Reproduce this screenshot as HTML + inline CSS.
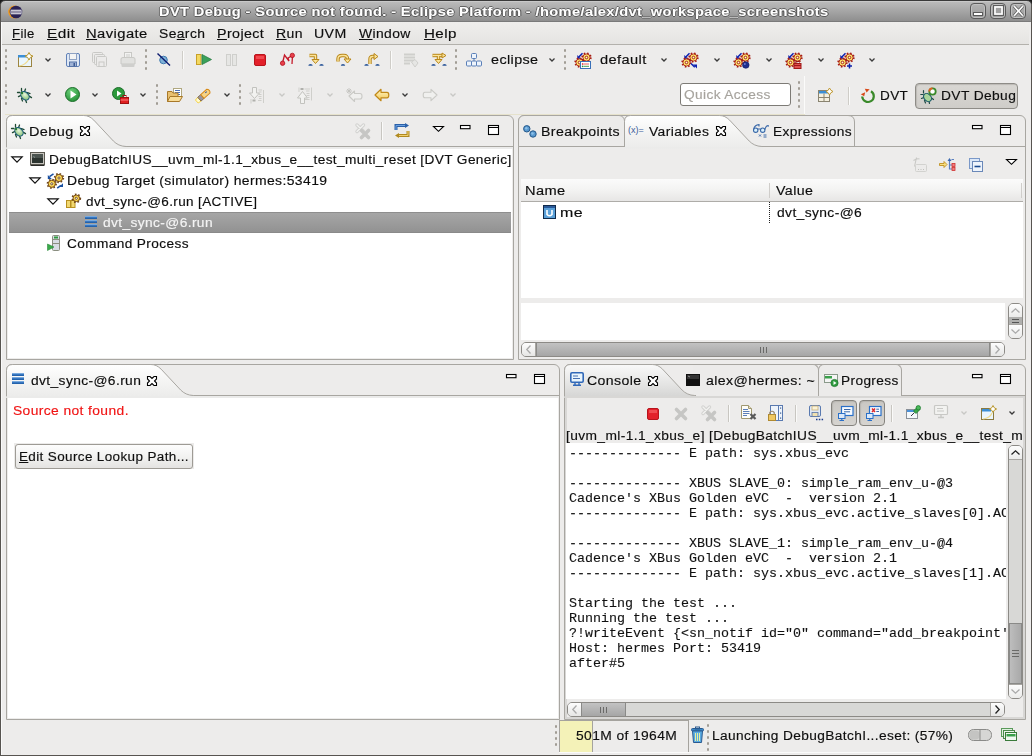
<!DOCTYPE html><html><head><meta charset="utf-8"><style>
*{box-sizing:border-box;margin:0;padding:0}
html,body{width:1032px;height:756px;overflow:hidden;background:#edeceb;font-family:"Liberation Sans",sans-serif;font-size:12.5px;color:#0e0e0e;letter-spacing:0.95px}
.a{position:absolute;white-space:nowrap}
svg.a{overflow:visible}
.t{line-height:15px;white-space:pre;will-change:transform;-webkit-text-stroke:0.15px currentColor}
.mono{font-family:"Liberation Mono",monospace;font-size:13.33px;letter-spacing:0;white-space:pre;line-height:15px;color:#111;will-change:transform;-webkit-text-stroke:0.12px #111}
u{text-decoration:underline;text-underline-offset:1px;text-decoration-thickness:1px}
</style></head><body>
<div class="a" style="left:0px;top:0px;width:8px;height:8px;background:#1a1a1a"></div>
<div class="a" style="left:1024px;top:0px;width:8px;height:8px;background:#1a1a1a"></div>
<div class="a" style="left:0px;top:0px;width:1032px;height:22px;background:linear-gradient(#bdbdbd,#8c8c8c);border-top:1px solid #3a3a3a;border-left:1px solid #4a4a4a;border-right:1px solid #4a4a4a;border-radius:5px 5px 0 0"></div>
<div class="a" style="left:0px;top:21px;width:1032px;height:1px;background:#7a7a7a"></div>
<div class="a" style="left:5px;top:1px;width:1022px;height:1px;background:#c9c9c9"></div>
<div class="a" style="left:0px;top:4px;width:1px;height:752px;background:#575450"></div>
<div class="a" style="left:1031px;top:4px;width:1px;height:752px;background:#575450"></div>
<div class="a" style="left:0px;top:755px;width:1032px;height:1px;background:#575450"></div>
<div class="a" style="left:1px;top:22px;width:1px;height:733px;background:#fafafa"></div>
<svg class="a" style="left:8px;top:5px;" width="15" height="14" viewBox="0 0 15 14"><circle cx="6.6" cy="7" r="6.4" fill="#f39a1a"/><circle cx="8" cy="7" r="6.3" fill="#2a2254"/><path d="M2.6 5.2H13.6M2.2 7H14.2M2.6 8.8H13.6" stroke="#fff" stroke-width="1.1"/></svg>
<div class="a t" style="left:158.88px;top:4.20px;color:#fff;text-shadow:1px 0 0 rgba(64,64,64,.7),-1px 0 0 rgba(64,64,64,.7),0 1px 0 rgba(64,64,64,.7),0 -1px 0 rgba(64,64,64,.7);font-size:13px;font-weight:bold;letter-spacing:0.35px;transform:scaleX(1.1219);transform-origin:0 0;">DVT Debug - Source not found. - Eclipse Platform - /home/alex/dvt_workspace_screenshots</div>
<div class="a" style="left:970px;top:3px;width:16px;height:16px;border:1px solid #5a5a5a;border-radius:4px;background:linear-gradient(#b2b2b2,#9c9c9c);box-shadow:inset 0 0 0 1px #c0c0c0"></div>
<svg class="a" style="left:973px;top:12px;" width="10" height="4" viewBox="0 0 10 4"><rect x="0.5" y="0.5" width="9" height="3" fill="#fff" stroke="#5a5a5a" stroke-width="1"/></svg>
<div class="a" style="left:990px;top:3px;width:16px;height:16px;border:1px solid #5a5a5a;border-radius:4px;background:linear-gradient(#b2b2b2,#9c9c9c);box-shadow:inset 0 0 0 1px #c0c0c0"></div>
<svg class="a" style="left:993px;top:5px;" width="11" height="11" viewBox="0 0 11 11"><rect x="0.5" y="0.5" width="10" height="10" fill="none" stroke="#5e5e5e" stroke-width="1"/><rect x="2" y="2" width="7" height="7" fill="#a0a0a0" stroke="#fff" stroke-width="1.6"/></svg>
<div class="a" style="left:1010px;top:3px;width:16px;height:16px;border:1px solid #5a5a5a;border-radius:4px;background:linear-gradient(#b2b2b2,#9c9c9c);box-shadow:inset 0 0 0 1px #c0c0c0"></div>
<svg class="a" style="left:1013px;top:5px;" width="11" height="12" viewBox="0 0 11 12"><path d="M1.2 1.2L9.8 10.8M9.8 1.2L1.2 10.8" stroke="#5a5a5a" stroke-width="3"/><path d="M1.2 1.2L9.8 10.8M9.8 1.2L1.2 10.8" stroke="#fff" stroke-width="1.6"/></svg>
<div class="a" style="left:2px;top:22px;width:1027px;height:22px;background:linear-gradient(#efeeec,#e5e4e2)"></div>
<div class="a" style="left:2px;top:44px;width:1027px;height:1px;background:#b3b1ac"></div>
<div class="a t" style="left:11.95px;top:26.97px;letter-spacing:0.35px;transform:scaleX(1.0499);transform-origin:0 0;"><u>F</u>ile</div>
<div class="a t" style="left:46.77px;top:26.97px;letter-spacing:0.35px;transform:scaleX(1.2319);transform-origin:0 0;"><u>E</u>dit</div>
<div class="a t" style="left:85.82px;top:26.97px;letter-spacing:0.35px;transform:scaleX(1.1830);transform-origin:0 0;"><u>N</u>avigate</div>
<div class="a t" style="left:159.29px;top:26.97px;letter-spacing:0.35px;transform:scaleX(1.1097);transform-origin:0 0;">Se<u>a</u>rch</div>
<div class="a t" style="left:216.86px;top:26.97px;letter-spacing:0.35px;transform:scaleX(1.1407);transform-origin:0 0;"><u>P</u>roject</div>
<div class="a t" style="left:276.28px;top:26.97px;letter-spacing:0.35px;transform:scaleX(1.1208);transform-origin:0 0;"><u>R</u>un</div>
<div class="a t" style="left:314.37px;top:26.97px;letter-spacing:0.35px;transform:scaleX(1.1323);transform-origin:0 0;">UVM</div>
<div class="a t" style="left:359.10px;top:26.97px;letter-spacing:0.35px;transform:scaleX(1.1104);transform-origin:0 0;"><u>W</u>indow</div>
<div class="a t" style="left:424.19px;top:26.97px;letter-spacing:0.35px;transform:scaleX(1.2100);transform-origin:0 0;"><u>H</u>elp</div>
<div class="a" style="left:5px;top:49px;width:2px;height:3px;background:#a09c94;border-radius:1px"></div>
<div class="a" style="left:5px;top:55px;width:2px;height:3px;background:#a09c94;border-radius:1px"></div>
<div class="a" style="left:5px;top:61px;width:2px;height:3px;background:#a09c94;border-radius:1px"></div>
<div class="a" style="left:5px;top:67px;width:2px;height:3px;background:#a09c94;border-radius:1px"></div>
<svg class="a" style="left:17px;top:52px;" width="16" height="16" viewBox="0 0 16 16"><rect x="1.5" y="3.5" width="13" height="11" fill="#eaf6fe" stroke="#9c8440"/><rect x="1" y="3" width="10" height="2.5" fill="#3c8fd6"/><path d="M2 14 Q9 13 12 7" stroke="#f0dc90" stroke-width="1.2" fill="none"/><path d="M12 0.5 L13.4 3 L16 4.2 L13.4 5.4 L12 8 L10.6 5.4 L8 4.2 L10.6 3 Z" fill="#fff" stroke="#b8962c" stroke-width="1"/></svg>
<svg class="a" style="left:45px;top:58px;" width="6" height="4" viewBox="0 0 6 4"><path d="M0.5 0.5 L3 3 L5.5 0.5" fill="none" stroke="#3a3a3a" stroke-width="1.3"/></svg>
<svg class="a" style="left:65px;top:52px;" width="16" height="16" viewBox="0 0 16 16"><rect x="1.5" y="1.5" width="13" height="13" rx="1.5" fill="#dfe8f5" stroke="#6282b8"/><rect x="4.5" y="1.5" width="7" height="6" fill="#f4f4f4" stroke="#8ea2c4"/><rect x="4.5" y="10" width="7" height="4.5" fill="#9fb3d6" stroke="#5674a8"/><rect x="8.5" y="11" width="1.5" height="3" fill="#3d5a92"/></svg>
<svg class="a" style="left:92px;top:52px;" width="16" height="16" viewBox="0 0 16 16"><g fill="none" stroke="#c9c9c6"><rect x="0.5" y="0.5" width="10" height="10" rx="1"/><rect x="2.5" y="2.5" width="10" height="10" rx="1" fill="#ecebea"/><rect x="4.5" y="4.5" width="10" height="10" rx="1" fill="#ecebea"/><rect x="7" y="10" width="5" height="4.5"/></g></svg>
<svg class="a" style="left:120px;top:52px;" width="16" height="16" viewBox="0 0 16 16"><rect x="4.5" y="0.5" width="7" height="8" fill="#f2f2f1" stroke="#c8c8c5"/><path d="M1 7 Q1 5.5 3 5.5 H13 Q15 5.5 15 7 V12 H1Z" fill="#e1e1df" stroke="#c8c8c5"/><rect x="1.5" y="12" width="13" height="3" rx="1" fill="#cfcfcd"/><path d="M6 3H10M6 5H10" stroke="#cdcdca"/></svg>
<div class="a" style="left:145px;top:49px;width:2px;height:3px;background:#a09c94;border-radius:1px"></div>
<div class="a" style="left:145px;top:55px;width:2px;height:3px;background:#a09c94;border-radius:1px"></div>
<div class="a" style="left:145px;top:61px;width:2px;height:3px;background:#a09c94;border-radius:1px"></div>
<div class="a" style="left:145px;top:67px;width:2px;height:3px;background:#a09c94;border-radius:1px"></div>
<svg class="a" style="left:157px;top:53px;" width="14" height="14" viewBox="0 0 14 14"><circle cx="6.5" cy="7" r="3.8" fill="#7fb2d8" stroke="#3f7ab0"/><path d="M0.5 0.5 L13 12.5" stroke="#0d1a6e" stroke-width="1.4"/></svg>
<div class="a" style="left:182px;top:51px;width:1px;height:18px;background:#cfcdc8"></div>
<div class="a" style="left:183px;top:51px;width:1px;height:18px;background:#fbfbfa"></div>
<svg class="a" style="left:196px;top:54px;" width="16" height="12" viewBox="0 0 16 12"><rect x="0.5" y="0.5" width="4.5" height="10" fill="#f3d860" stroke="#c8a028"/><path d="M6 0.5 L15.5 5.5 L6 10.5Z" fill="#3aa15a" stroke="#2c7e46" stroke-width="0.8"/></svg>
<svg class="a" style="left:226px;top:54px;" width="12" height="12" viewBox="0 0 12 12"><rect x="0.5" y="0.5" width="4" height="11" fill="#e6e6e4" stroke="#cfcfcc"/><rect x="6.5" y="0.5" width="4" height="11" fill="#e6e6e4" stroke="#cfcfcc"/></svg>
<svg class="a" style="left:254px;top:54px;" width="12" height="12" viewBox="0 0 12 12"><rect x="0.5" y="0.5" width="11" height="11" rx="1.5" fill="#e3202a" stroke="#b8141c"/><rect x="2" y="2" width="8" height="3" fill="#f04a50"/></svg>
<svg class="a" style="left:280px;top:53px;" width="15" height="13" viewBox="0 0 15 13"><path d="M2.5 10 L4.5 2 L9 8 L8 5 L12.5 2.5 L12 11" fill="none" stroke="#c51a2a" stroke-width="1.3"/><circle cx="2.6" cy="10.2" r="2.2" fill="#e8404a" stroke="#b01020" stroke-width="0.8"/><circle cx="12.3" cy="2.4" r="2.2" fill="#e8404a" stroke="#b01020" stroke-width="0.8"/></svg>
<svg class="a" style="left:308px;top:54px;" width="16" height="12" viewBox="0 0 16 12"><path d="M1.5 1.5 H7.5 V6" fill="none" stroke="#b8861a" stroke-width="3.4" stroke-linejoin="round"/><path d="M1.5 1.5 H7.5 V6" fill="none" stroke="#fbe49a" stroke-width="1.4" stroke-linejoin="round"/><path d="M4 5.5 H11 L7.5 9.5Z" fill="#fbe49a" stroke="#b8861a" stroke-width="1" stroke-linejoin="round"/><path d="M0.3 11.8 A2.2 1.8 0 0 1 4.7 11.8 Z" fill="#2a5698"/><path d="M11.3 11.8 A2.2 1.8 0 0 1 15.700000000000001 11.8 Z" fill="#2a5698"/></svg>
<svg class="a" style="left:336px;top:54px;" width="16" height="12" viewBox="0 0 16 12"><path d="M2 7.5 V5 Q2 1.5 6 1.5 H8 Q11.5 1.5 11.5 5" fill="none" stroke="#b8861a" stroke-width="3.4" stroke-linejoin="round"/><path d="M2 7.5 V5 Q2 1.5 6 1.5 H8 Q11.5 1.5 11.5 5" fill="none" stroke="#fbe49a" stroke-width="1.4" stroke-linejoin="round"/><path d="M8 5 H15 L11.5 9Z" fill="#fbe49a" stroke="#b8861a" stroke-width="1" stroke-linejoin="round"/><path d="M4.8 11.8 A2.2 1.8 0 0 1 9.2 11.8 Z" fill="#2a5698"/></svg>
<svg class="a" style="left:364px;top:53px;" width="16" height="13" viewBox="0 0 16 13"><path d="M6 11 V6 Q6 3.5 8.5 3.5 H10.5" fill="none" stroke="#b8861a" stroke-width="3.4" stroke-linejoin="round"/><path d="M6 11 V6 Q6 3.5 8.5 3.5 H10.5" fill="none" stroke="#fbe49a" stroke-width="1.4" stroke-linejoin="round"/><path d="M10 0.5 L14 3.5 L10 6.5Z" fill="#fbe49a" stroke="#b8861a" stroke-width="1" stroke-linejoin="round"/><path d="M0.3 12.8 A2.2 1.8 0 0 1 4.7 12.8 Z" fill="#2a5698"/><path d="M11.3 12.8 A2.2 1.8 0 0 1 15.700000000000001 12.8 Z" fill="#2a5698"/></svg>
<div class="a" style="left:390px;top:51px;width:1px;height:18px;background:#cfcdc8"></div>
<div class="a" style="left:391px;top:51px;width:1px;height:18px;background:#fbfbfa"></div>
<svg class="a" style="left:403px;top:53px;" width="16" height="15" viewBox="0 0 16 15"><path d="M1 1.5H12M1 4.5H12M1 7.5H12M1 10.5H7" stroke="#cfcfcc" stroke-width="2"/><path d="M8.5 9 L12 6.5 L15 10 L12 14 Z" fill="#e6e6e4" stroke="#cfcfcc"/></svg>
<svg class="a" style="left:431px;top:53px;" width="16" height="13" viewBox="0 0 16 13"><path d="M1.5 2.5 H11" fill="none" stroke="#b8861a" stroke-width="3.4" stroke-linejoin="round"/><path d="M1.5 2.5 H11" fill="none" stroke="#fbe49a" stroke-width="1.4" stroke-linejoin="round"/><path d="M11 0 L15 2.5 L11 5Z" fill="#fbe49a" stroke="#b8861a" stroke-width="1" stroke-linejoin="round"/><path d="M7.5 3 V7" fill="none" stroke="#b8861a" stroke-width="3.4" stroke-linejoin="round"/><path d="M7.5 3 V7" fill="none" stroke="#fbe49a" stroke-width="1.4" stroke-linejoin="round"/><path d="M4 6.5 H11 L7.5 10.5Z" fill="#fbe49a" stroke="#b8861a" stroke-width="1" stroke-linejoin="round"/><path d="M0.3 12.8 A2.2 1.8 0 0 1 4.7 12.8 Z" fill="#2a5698"/><path d="M11.3 12.8 A2.2 1.8 0 0 1 15.700000000000001 12.8 Z" fill="#2a5698"/></svg>
<div class="a" style="left:455px;top:49px;width:2px;height:3px;background:#a09c94;border-radius:1px"></div>
<div class="a" style="left:455px;top:55px;width:2px;height:3px;background:#a09c94;border-radius:1px"></div>
<div class="a" style="left:455px;top:61px;width:2px;height:3px;background:#a09c94;border-radius:1px"></div>
<div class="a" style="left:455px;top:67px;width:2px;height:3px;background:#a09c94;border-radius:1px"></div>
<svg class="a" style="left:466px;top:53px;" width="17" height="14" viewBox="0 0 17 14"><g fill="#eef4fb" stroke="#5a7fb8"><rect x="5.5" y="0.5" width="5" height="5" rx="1"/><rect x="0.5" y="8" width="5" height="5" rx="1"/><rect x="5.5" y="8" width="5" height="5" rx="1"/><rect x="10.5" y="8" width="5" height="5" rx="1"/></g><path d="M8 5.5V8" stroke="#5a7fb8"/></svg>
<div class="a t" style="left:490.70px;top:53.27px;letter-spacing:0.35px;transform:scaleX(1.1483);transform-origin:0 0;">eclipse</div>
<svg class="a" style="left:549px;top:58px;" width="6" height="4" viewBox="0 0 6 4"><path d="M0.5 0.5 L3 3 L5.5 0.5" fill="none" stroke="#3a3a3a" stroke-width="1.3"/></svg>
<div class="a" style="left:564px;top:49px;width:2px;height:3px;background:#a09c94;border-radius:1px"></div>
<div class="a" style="left:564px;top:55px;width:2px;height:3px;background:#a09c94;border-radius:1px"></div>
<div class="a" style="left:564px;top:61px;width:2px;height:3px;background:#a09c94;border-radius:1px"></div>
<div class="a" style="left:564px;top:67px;width:2px;height:3px;background:#a09c94;border-radius:1px"></div>
<svg class="a" style="left:574px;top:52px;" width="17" height="17" viewBox="0 0 17 17"><path d="M8.5 1.3 L4.8 5" stroke="#0c20b0" stroke-width="1.5"/><path d="M3.3 3 L3.3 6.7 L7 6.7 Z" fill="#0c20b0"/><circle cx="12.5" cy="5.5" r="4.3" fill="none" stroke="#a81c12" stroke-width="1.7" stroke-dasharray="1.5 1.9"/><circle cx="12.5" cy="5.5" r="3.5999999999999996" fill="#fbe46a" stroke="#a81c12" stroke-width="0.9"/><circle cx="12.5" cy="5.5" r="1.3" fill="#fff8d8" stroke="#a81c12" stroke-width="1"/><circle cx="5.5" cy="10.5" r="4.3" fill="none" stroke="#a81c12" stroke-width="1.7" stroke-dasharray="1.5 1.9"/><circle cx="5.5" cy="10.5" r="3.5999999999999996" fill="#fbe46a" stroke="#a81c12" stroke-width="0.9"/><circle cx="5.5" cy="10.5" r="1.3" fill="#fff8d8" stroke="#a81c12" stroke-width="1"/><rect x="6.5" y="9.5" width="10" height="7" fill="#fff" stroke="#3a70b8"/><circle cx="8.7" cy="12" r="0.9" fill="#e04848"/><path d="M10 12H15" stroke="#e86060"/><circle cx="8.7" cy="14.3" r="0.9" fill="#2a8a40"/><path d="M10 14.3H15" stroke="#4aa050"/></svg>
<div class="a t" style="left:599.50px;top:53.27px;letter-spacing:0.35px;transform:scaleX(1.1680);transform-origin:0 0;">default</div>
<svg class="a" style="left:661px;top:58px;" width="6" height="4" viewBox="0 0 6 4"><path d="M0.5 0.5 L3 3 L5.5 0.5" fill="none" stroke="#3a3a3a" stroke-width="1.3"/></svg>
<svg class="a" style="left:681px;top:52px;" width="17" height="17" viewBox="0 0 17 17"><path d="M8.5 1.3 L4.8 5" stroke="#0c20b0" stroke-width="1.5"/><path d="M3.3 3 L3.3 6.7 L7 6.7 Z" fill="#0c20b0"/><circle cx="12.5" cy="5.5" r="4.3" fill="none" stroke="#a81c12" stroke-width="1.7" stroke-dasharray="1.5 1.9"/><circle cx="12.5" cy="5.5" r="3.5999999999999996" fill="#fbe46a" stroke="#a81c12" stroke-width="0.9"/><circle cx="12.5" cy="5.5" r="1.3" fill="#fff8d8" stroke="#a81c12" stroke-width="1"/><circle cx="5.5" cy="10.5" r="4.3" fill="none" stroke="#a81c12" stroke-width="1.7" stroke-dasharray="1.5 1.9"/><circle cx="5.5" cy="10.5" r="3.5999999999999996" fill="#fbe46a" stroke="#a81c12" stroke-width="0.9"/><circle cx="5.5" cy="10.5" r="1.3" fill="#fff8d8" stroke="#a81c12" stroke-width="1"/><path d="M10 11.5 L13.8 15.3" stroke="#0c20b0" stroke-width="1.5"/><path d="M16 16.5 V12.5 H12Z" fill="#0c20b0"/></svg>
<svg class="a" style="left:714px;top:58px;" width="6" height="4" viewBox="0 0 6 4"><path d="M0.5 0.5 L3 3 L5.5 0.5" fill="none" stroke="#3a3a3a" stroke-width="1.3"/></svg>
<svg class="a" style="left:733px;top:52px;" width="17" height="17" viewBox="0 0 17 17"><path d="M8.5 1.3 L4.8 5" stroke="#0c20b0" stroke-width="1.5"/><path d="M3.3 3 L3.3 6.7 L7 6.7 Z" fill="#0c20b0"/><circle cx="12.5" cy="5.5" r="4.3" fill="none" stroke="#a81c12" stroke-width="1.7" stroke-dasharray="1.5 1.9"/><circle cx="12.5" cy="5.5" r="3.5999999999999996" fill="#fbe46a" stroke="#a81c12" stroke-width="0.9"/><circle cx="12.5" cy="5.5" r="1.3" fill="#fff8d8" stroke="#a81c12" stroke-width="1"/><circle cx="5.5" cy="10.5" r="4.3" fill="none" stroke="#a81c12" stroke-width="1.7" stroke-dasharray="1.5 1.9"/><circle cx="5.5" cy="10.5" r="3.5999999999999996" fill="#fbe46a" stroke="#a81c12" stroke-width="0.9"/><circle cx="5.5" cy="10.5" r="1.3" fill="#fff8d8" stroke="#a81c12" stroke-width="1"/><circle cx="12.8" cy="13" r="3.3" fill="#1e2e8e" stroke="#101a60" stroke-width="0.6"/><circle cx="11.8" cy="12" r="1" fill="#6a7ad0"/></svg>
<svg class="a" style="left:766px;top:58px;" width="6" height="4" viewBox="0 0 6 4"><path d="M0.5 0.5 L3 3 L5.5 0.5" fill="none" stroke="#3a3a3a" stroke-width="1.3"/></svg>
<svg class="a" style="left:785px;top:52px;" width="17" height="17" viewBox="0 0 17 17"><path d="M8.5 1.3 L4.8 5" stroke="#0c20b0" stroke-width="1.5"/><path d="M3.3 3 L3.3 6.7 L7 6.7 Z" fill="#0c20b0"/><circle cx="12.5" cy="5.5" r="4.3" fill="none" stroke="#a81c12" stroke-width="1.7" stroke-dasharray="1.5 1.9"/><circle cx="12.5" cy="5.5" r="3.5999999999999996" fill="#fbe46a" stroke="#a81c12" stroke-width="0.9"/><circle cx="12.5" cy="5.5" r="1.3" fill="#fff8d8" stroke="#a81c12" stroke-width="1"/><circle cx="5.5" cy="10.5" r="4.3" fill="none" stroke="#a81c12" stroke-width="1.7" stroke-dasharray="1.5 1.9"/><circle cx="5.5" cy="10.5" r="3.5999999999999996" fill="#fbe46a" stroke="#a81c12" stroke-width="0.9"/><circle cx="5.5" cy="10.5" r="1.3" fill="#fff8d8" stroke="#a81c12" stroke-width="1"/><rect x="9" y="11.5" width="7" height="5" fill="#e05050" stroke="#a01818"/><path d="M9 13.5H16" stroke="#a01818"/><rect x="11" y="9.5" width="3" height="2" fill="none" stroke="#a01818"/></svg>
<svg class="a" style="left:818px;top:58px;" width="6" height="4" viewBox="0 0 6 4"><path d="M0.5 0.5 L3 3 L5.5 0.5" fill="none" stroke="#3a3a3a" stroke-width="1.3"/></svg>
<svg class="a" style="left:837px;top:52px;" width="17" height="17" viewBox="0 0 17 17"><path d="M8.5 1.3 L4.8 5" stroke="#0c20b0" stroke-width="1.5"/><path d="M3.3 3 L3.3 6.7 L7 6.7 Z" fill="#0c20b0"/><circle cx="12.5" cy="5.5" r="4.3" fill="none" stroke="#a81c12" stroke-width="1.7" stroke-dasharray="1.5 1.9"/><circle cx="12.5" cy="5.5" r="3.5999999999999996" fill="#fbe46a" stroke="#a81c12" stroke-width="0.9"/><circle cx="12.5" cy="5.5" r="1.3" fill="#fff8d8" stroke="#a81c12" stroke-width="1"/><circle cx="5.5" cy="10.5" r="4.3" fill="none" stroke="#a81c12" stroke-width="1.7" stroke-dasharray="1.5 1.9"/><circle cx="5.5" cy="10.5" r="3.5999999999999996" fill="#fbe46a" stroke="#a81c12" stroke-width="0.9"/><circle cx="5.5" cy="10.5" r="1.3" fill="#fff8d8" stroke="#a81c12" stroke-width="1"/><path d="M12.5 11.5V16.5M10 14H15" stroke="#0a1fa8" stroke-width="1.5"/></svg>
<svg class="a" style="left:869px;top:58px;" width="6" height="4" viewBox="0 0 6 4"><path d="M0.5 0.5 L3 3 L5.5 0.5" fill="none" stroke="#3a3a3a" stroke-width="1.3"/></svg>
<div class="a" style="left:5px;top:84px;width:2px;height:3px;background:#a09c94;border-radius:1px"></div>
<div class="a" style="left:5px;top:90px;width:2px;height:3px;background:#a09c94;border-radius:1px"></div>
<div class="a" style="left:5px;top:96px;width:2px;height:3px;background:#a09c94;border-radius:1px"></div>
<div class="a" style="left:5px;top:102px;width:2px;height:3px;background:#a09c94;border-radius:1px"></div>
<svg class="a" style="left:17px;top:88px;" width="16" height="16" viewBox="0 0 16 16"><defs><radialGradient id="bgGbug" cx="0.4" cy="0.4" r="0.7"><stop offset="0" stop-color="#e8f6dc"/><stop offset="1" stop-color="#7cbc6c"/></radialGradient></defs><g stroke="#1e4a34" stroke-width="1.3" stroke-linecap="round" fill="none"><path d="M4.5 0.5 V3.2M0.5 4.5 H3M8.5 1 L7.6 3.4M10.5 4.6 L13 5.6M12.5 8.2 L14.5 9.6M1.5 8.6 L3.5 7.6M4.5 10.5 L5.5 13M8.6 12 L9.5 14.5"/></g><ellipse cx="8" cy="7.8" rx="4.8" ry="3.5" transform="rotate(45 8 7.8)" fill="url(#bgGbug)" stroke="#1a5a78" stroke-width="1.1"/><circle cx="5" cy="5" r="1.2" fill="#2a7a3a"/></svg>
<svg class="a" style="left:45px;top:93px;" width="6" height="4" viewBox="0 0 6 4"><path d="M0.5 0.5 L3 3 L5.5 0.5" fill="none" stroke="#3a3a3a" stroke-width="1.3"/></svg>
<svg class="a" style="left:65px;top:87px;" width="16" height="16" viewBox="0 0 16 16"><defs><radialGradient id="rnG" cx="0.4" cy="0.3" r="0.8"><stop offset="0" stop-color="#6cd07a"/><stop offset="1" stop-color="#1e8a30"/></radialGradient></defs><circle cx="7.5" cy="7.5" r="7" fill="url(#rnG)" stroke="#1a6e28"/><path d="M5.5 3.5 L11.5 7.5 L5.5 11.5Z" fill="#fff"/></svg>
<svg class="a" style="left:92px;top:93px;" width="6" height="4" viewBox="0 0 6 4"><path d="M0.5 0.5 L3 3 L5.5 0.5" fill="none" stroke="#3a3a3a" stroke-width="1.3"/></svg>
<svg class="a" style="left:112px;top:87px;" width="17" height="17" viewBox="0 0 17 17"><circle cx="6.5" cy="6.5" r="6" fill="#2c9a3c" stroke="#1d6e2a"/><path d="M5 3.5 L9.5 6.5 L5 9.5Z" fill="#fff"/><rect x="8.5" y="10.5" width="8" height="6" fill="#e02020" stroke="#a01010"/><path d="M8.5 13H16.5" stroke="#ff8080"/><rect x="11" y="8.5" width="3" height="2" fill="none" stroke="#a01010"/></svg>
<svg class="a" style="left:140px;top:93px;" width="6" height="4" viewBox="0 0 6 4"><path d="M0.5 0.5 L3 3 L5.5 0.5" fill="none" stroke="#3a3a3a" stroke-width="1.3"/></svg>
<div class="a" style="left:156px;top:84px;width:2px;height:3px;background:#a09c94;border-radius:1px"></div>
<div class="a" style="left:156px;top:90px;width:2px;height:3px;background:#a09c94;border-radius:1px"></div>
<div class="a" style="left:156px;top:96px;width:2px;height:3px;background:#a09c94;border-radius:1px"></div>
<div class="a" style="left:156px;top:102px;width:2px;height:3px;background:#a09c94;border-radius:1px"></div>
<svg class="a" style="left:167px;top:88px;" width="16" height="14" viewBox="0 0 16 14"><rect x="6.5" y="0.5" width="8" height="9" fill="#fff" stroke="#b0a880"/><path d="M8 2.5H13M8 4.5H13M8 6.5H13" stroke="#4a70b8"/><path d="M0.5 3.5H5L6 5H11V13.5H0.5Z" fill="#e8c070" stroke="#a87828"/><path d="M0.5 13.5 L3 8.5 H15.5 L12.5 13.5Z" fill="#f8dc98" stroke="#a87828"/></svg>
<svg class="a" style="left:195px;top:88px;" width="17" height="15" viewBox="0 0 17 15"><g transform="rotate(-42 8.5 7.5)"><path d="M-0.5 5.5 L3 5 V10 L-0.5 9.5Z" fill="#fffbd0" stroke="#f4d040" stroke-width="0.9"/><rect x="3" y="5" width="4" height="5" fill="#9c98a0" stroke="#7a6040" stroke-width="0.8"/><path d="M7 5 H15 Q17.5 7.5 15 10 H7Z" fill="#f6d488" stroke="#d88a18" stroke-width="1"/><path d="M11.5 6.8 H13.5" stroke="#3a5a9a" stroke-width="1"/></g></svg>
<svg class="a" style="left:224px;top:93px;" width="6" height="4" viewBox="0 0 6 4"><path d="M0.5 0.5 L3 3 L5.5 0.5" fill="none" stroke="#3a3a3a" stroke-width="1.3"/></svg>
<div class="a" style="left:239px;top:84px;width:2px;height:3px;background:#a09c94;border-radius:1px"></div>
<div class="a" style="left:239px;top:90px;width:2px;height:3px;background:#a09c94;border-radius:1px"></div>
<div class="a" style="left:239px;top:96px;width:2px;height:3px;background:#a09c94;border-radius:1px"></div>
<div class="a" style="left:239px;top:102px;width:2px;height:3px;background:#a09c94;border-radius:1px"></div>
<svg class="a" style="left:250px;top:87px;" width="15" height="17" viewBox="0 0 15 17"><path d="M2.5 0.5 H6.5 V6 H9.5 L4.5 11.5 L-0.5 6 H2.5 Z" fill="#f2f2f0" stroke="#c2c2be"/><g stroke="#cfcfcb" fill="none"><path d="M13.5 3 V16M1 12 V16.5"/><path d="M8.5 3H12M9 5H11.5M9 7.5H11.5M8.5 9.5H11.5M9 11.5H11.5M8 13.5H11.5"/></g><rect x="2.5" y="12.5" width="3" height="2" fill="#b0b0ac"/></svg>
<svg class="a" style="left:279px;top:93px;" width="6" height="4" viewBox="0 0 6 4"><path d="M0.5 0.5 L3 3 L5.5 0.5" fill="none" stroke="#c8c8c5" stroke-width="1.3"/></svg>
<svg class="a" style="left:298px;top:87px;" width="15" height="17" viewBox="0 0 15 17"><path d="M2.5 16.5 H6.5 V11 H9.5 L4.5 4.5 L-0.5 11 H2.5 Z" fill="#f2f2f0" stroke="#c2c2be"/><g stroke="#cfcfcb" fill="none"><path d="M13.5 0.5 V13.5M1 0.5 V5"/><path d="M6.5 2H12M8 4H11.5M8.5 6.5H11.5M8.5 8.5H11.5M9 10.5H11.5M7 12.5H11.5"/></g><rect x="2.5" y="1" width="3" height="2" fill="#b0b0ac"/></svg>
<svg class="a" style="left:327px;top:93px;" width="6" height="4" viewBox="0 0 6 4"><path d="M0.5 0.5 L3 3 L5.5 0.5" fill="none" stroke="#c8c8c5" stroke-width="1.3"/></svg>
<svg class="a" style="left:346px;top:88px;" width="17" height="14" viewBox="0 0 17 14"><path d="M3 8 L8.5 3 V5.5 H14 Q16 5.5 16 8.2 Q16 11 14 11 H8.5 V13.5Z" fill="#f0f0ee" stroke="#cacac6" stroke-width="1.1" stroke-linejoin="round"/><path d="M1 1 L5 5M5 1 L1 5M3 0 V6M0 3H6" stroke="#c4c4c0" stroke-width="0.9"/></svg>
<svg class="a" style="left:374px;top:88px;" width="16" height="14" viewBox="0 0 16 14"><defs><linearGradient id="bk" x1="0" y1="0" x2="0" y2="1"><stop offset="0" stop-color="#fff6c8"/><stop offset="1" stop-color="#f2c650"/></linearGradient></defs><path d="M1 7 L7 1.3 V4.3 H13 Q14.8 4.3 14.8 7 Q14.8 9.8 13 9.8 H7 V12.7Z" fill="url(#bk)" stroke="#c08818" stroke-width="1.2" stroke-linejoin="round"/></svg>
<svg class="a" style="left:402px;top:93px;" width="6" height="4" viewBox="0 0 6 4"><path d="M0.5 0.5 L3 3 L5.5 0.5" fill="none" stroke="#3a3a3a" stroke-width="1.3"/></svg>
<svg class="a" style="left:422px;top:88px;" width="16" height="14" viewBox="0 0 16 14"><path d="M15 7 L9 1.3 V4.3 H3 Q1.2 4.3 1.2 7 Q1.2 9.8 3 9.8 H9 V12.7Z" fill="#f0f0ee" stroke="#cacac6" stroke-width="1.1" stroke-linejoin="round"/></svg>
<svg class="a" style="left:450px;top:93px;" width="6" height="4" viewBox="0 0 6 4"><path d="M0.5 0.5 L3 3 L5.5 0.5" fill="none" stroke="#c8c8c5" stroke-width="1.3"/></svg>
<div class="a" style="left:680px;top:83px;width:111px;height:23px;background:#fff;border:1px solid #7d7b76;border-radius:3px"></div>
<div class="a t" style="left:683.70px;top:87.87px;color:#a6a39d;letter-spacing:0.35px;transform:scaleX(1.0956);transform-origin:0 0;">Quick Access</div>
<div class="a" style="left:798px;top:81px;width:2px;height:3px;background:#a09c94;border-radius:1px"></div>
<div class="a" style="left:798px;top:87px;width:2px;height:3px;background:#a09c94;border-radius:1px"></div>
<div class="a" style="left:798px;top:93px;width:2px;height:3px;background:#a09c94;border-radius:1px"></div>
<div class="a" style="left:798px;top:99px;width:2px;height:3px;background:#a09c94;border-radius:1px"></div>
<div class="a" style="left:798px;top:105px;width:2px;height:3px;background:#a09c94;border-radius:1px"></div>
<div class="a" style="left:804px;top:76px;width:1px;height:38px;background:#fbfbfa"></div>
<svg class="a" style="left:818px;top:88px;" width="15" height="14" viewBox="0 0 15 14"><rect x="0.5" y="2.5" width="11" height="11" fill="#f4f0e0" stroke="#8a8470"/><rect x="1" y="3" width="10" height="2.5" fill="#3c8fd6"/><path d="M6 5.5V13.5M0.5 9.5H11.5" stroke="#8a8470"/><path d="M11.5 0 L12.8 2.2 L15 3.5 L12.8 4.8 L11.5 7 L10.2 4.8 L8 3.5 L10.2 2.2Z" fill="#fff" stroke="#c09830"/></svg>
<div class="a" style="left:848px;top:87px;width:1px;height:18px;background:#cfcdc8"></div>
<div class="a" style="left:849px;top:87px;width:1px;height:18px;background:#fbfbfa"></div>
<svg class="a" style="left:860px;top:88px;" width="16" height="16" viewBox="0 0 16 16"><path d="M2.2 8.5 A5.8 5.8 0 1 0 11 3.2" fill="none" stroke="#3a8a2a" stroke-width="2.2"/><path d="M0.8 6.2 L5.2 4.2 L4.2 8.2Z" fill="#d84818"/><path d="M4.8 0.8 L9.6 1.2 L6.6 4.6Z" fill="#d84818"/></svg>
<div class="a t" style="left:880.22px;top:89.37px;letter-spacing:0.35px;transform:scaleX(1.0844);transform-origin:0 0;">DVT</div>
<div class="a" style="left:915px;top:83px;width:103px;height:26px;background:linear-gradient(#d9d7d3,#cfcdc9);border:1px solid #8e8c87;border-radius:4px;box-shadow:inset 1px 1px 1px #bcbab5"></div>
<svg class="a" style="left:920px;top:87px;" width="17" height="17" viewBox="0 0 17 17"><g stroke="#1e4a44" stroke-width="1.2" stroke-linecap="round" fill="none"><path d="M3.5 3.5 V6M0.8 7.5 H3.2M1.5 11.5 L3.8 10.5M4.5 13.5 L5.5 16M9 14.5 L9.5 16.5M11.5 11 L13.5 12.5"/></g><ellipse cx="7.5" cy="10.5" rx="4.5" ry="3.4" transform="rotate(45 7.5 10.5)" fill="#a8d49a" stroke="#1a5a68" stroke-width="1.1"/><circle cx="12.5" cy="4.5" r="3.2" fill="#fff" stroke="#3a8a2a" stroke-width="1.8"/><path d="M9.3 4.5 A3.2 3.2 0 0 1 12.5 1.3" fill="none" stroke="#e06020" stroke-width="1.8"/></svg>
<div class="a t" style="left:940.90px;top:89.37px;letter-spacing:0.35px;transform:scaleX(1.1019);transform-origin:0 0;">DVT Debug</div>
<div class="a" style="left:5px;top:114px;width:800px;height:1px;background:#e6e2cc"></div>
<div class="a" style="left:6px;top:115px;width:508px;height:245px;border:1px solid #a8a6a1;border-radius:6px 6px 0 0;background:#edeceb"></div>
<div class="a" style="left:7px;top:146px;width:506px;height:1px;background:#a8a6a1"></div>
<svg class="a" style="left:6px;top:115px;" width="121" height="34" viewBox="0 0 121 34"><defs><linearGradient id="g6_115" x1="0" y1="0" x2="0" y2="1"><stop offset="0" stop-color="#ffffff"/><stop offset="0.5" stop-color="#f4f4f3"/><stop offset="1" stop-color="#ebebea"/></linearGradient></defs><path d="M0.5 32 V6.5 Q0.5 0.5 6.5 0.5 H77.60 C81.60 0.50 84.60 2.01 87.80 5.14 L107.40 26.05 C110.60 29.28 114.60 31.30 120.10 31.5 H121 V34 H0 Z" fill="url(#g6_115)"/><path d="M0.5 32 V6.5 Q0.5 0.5 6.5 0.5 H77.60 C81.60 0.50 84.60 2.01 87.80 5.14 L107.40 26.05 C110.60 29.28 114.60 31.30 120.10 31.5 H121" fill="none" stroke="#a8a6a1" stroke-width="1"/></svg>
<div class="a" style="left:7px;top:147px;width:506px;height:2px;background:#ebebea"></div>
<div class="a" style="left:8px;top:149px;width:504px;height:209px;background:#fff"></div>
<svg class="a" style="left:11px;top:124px;" width="16" height="16" viewBox="0 0 16 16"><defs><radialGradient id="bgGtabbug" cx="0.4" cy="0.4" r="0.7"><stop offset="0" stop-color="#e8f6dc"/><stop offset="1" stop-color="#7cbc6c"/></radialGradient></defs><g stroke="#1e4a34" stroke-width="1.3" stroke-linecap="round" fill="none"><path d="M4.5 0.5 V3.2M0.5 4.5 H3M8.5 1 L7.6 3.4M10.5 4.6 L13 5.6M12.5 8.2 L14.5 9.6M1.5 8.6 L3.5 7.6M4.5 10.5 L5.5 13M8.6 12 L9.5 14.5"/></g><ellipse cx="8" cy="7.8" rx="4.8" ry="3.5" transform="rotate(45 8 7.8)" fill="url(#bgGtabbug)" stroke="#1a5a78" stroke-width="1.1"/><circle cx="5" cy="5" r="1.2" fill="#2a7a3a"/></svg>
<div class="a t" style="left:28.84px;top:124.97px;letter-spacing:0.35px;transform:scaleX(1.1582);transform-origin:0 0;">Debug</div>
<svg class="a" style="left:80px;top:126px;" width="10" height="10" viewBox="0 0 10 10"><path d="M0.5 0.5 H3 L5 2.5 L7 0.5 H9.5 V3 L7.5 5 L9.5 7 V9.5 H7 L5 7.5 L3 9.5 H0.5 V7 L2.5 5 L0.5 3 Z" fill="#fff" stroke="#000" stroke-width="1.1"/></svg>
<svg class="a" style="left:355px;top:123px;" width="16" height="17" viewBox="0 0 16 17"><path d="M2 2 L8.5 8.5M8.5 2 L2 8.5" stroke="#d2d2d0" stroke-width="3.4" stroke-linecap="round"/><path d="M2 2 L8.5 8.5M8.5 2 L2 8.5" stroke="#f2f2f0" stroke-width="1.4" stroke-linecap="round"/><path d="M6.5 7.5 L13.5 14.5M13.5 7.5 L6.5 14.5" stroke="#c6c6c4" stroke-width="3.6" stroke-linecap="round"/></svg>
<div class="a" style="left:381px;top:122px;width:1px;height:18px;background:#c8c6c1"></div>
<div class="a" style="left:382px;top:122px;width:1px;height:18px;background:#fafaf9"></div>
<svg class="a" style="left:394px;top:123px;" width="16" height="15" viewBox="0 0 16 15"><path d="M2 7 V2.5 H12" fill="none" stroke="#2a60a8" stroke-width="3"/><path d="M2 7 V2.5 H12" fill="none" stroke="#6aa0e0" stroke-width="1"/><path d="M11 0 L15 2.5 L11 5Z" fill="#2a60a8"/><path d="M14 8 V12.5 H4" fill="none" stroke="#b08a20" stroke-width="3"/><path d="M14 8 V12.5 H4" fill="none" stroke="#f0d070" stroke-width="1"/><path d="M5 10 L1 12.5 L5 15Z" fill="#b08a20"/></svg>
<svg class="a" style="left:433px;top:126px;" width="11" height="6" viewBox="0 0 11 6"><path d="M0.5 0.5 H10.5 L5.5 5.3 Z" fill="#fff" stroke="#000" stroke-width="1.1" stroke-linejoin="miter"/></svg>
<svg class="a" style="left:460px;top:125px;" width="11" height="5" viewBox="0 0 11 5"><rect x="0.5" y="0.5" width="9.5" height="3.2" fill="#fff" stroke="#000" stroke-width="1.1"/></svg>
<svg class="a" style="left:488px;top:125px;" width="11" height="11" viewBox="0 0 11 11"><rect x="0.5" y="0.5" width="10" height="9" fill="#fff" stroke="#000" stroke-width="1.1"/><path d="M1 2.5 H10" stroke="#000" stroke-width="1"/></svg>
<svg class="a" style="left:11px;top:156px;" width="12" height="7" viewBox="0 0 12 7"><path d="M0.8 0.8 H11.2 L6 6.2Z" fill="#fff" stroke="#111" stroke-width="1.2"/></svg>
<svg class="a" style="left:30px;top:152px;" width="15" height="14" viewBox="0 0 15 14"><rect x="0.5" y="0.5" width="14" height="12" fill="#c8c6c0" stroke="#5a5850"/><rect x="2" y="2" width="11" height="9" fill="#2c3430"/><rect x="2" y="2" width="11" height="4" fill="#4c5450"/><path d="M3.5 4.5 L5 5.5" stroke="#9aa" stroke-width="0.8"/><path d="M0.5 13.5H14.5" stroke="#2a2a28"/></svg>
<div class="a t" style="left:48.61px;top:152.67px;letter-spacing:0.35px;transform:scaleX(1.0934);transform-origin:0 0;">DebugBatchIUS__uvm_ml-1.1_xbus_e__test_multi_reset [DVT Generic]</div>
<svg class="a" style="left:29px;top:177px;" width="12" height="7" viewBox="0 0 12 7"><path d="M0.8 0.8 H11.2 L6 6.2Z" fill="#fff" stroke="#111" stroke-width="1.2"/></svg>
<svg class="a" style="left:47px;top:173px;" width="17" height="16" viewBox="0 0 17 16"><circle cx="12" cy="5" r="4.2" fill="none" stroke="#6e4418" stroke-width="1.9" stroke-dasharray="1.5 1.8"/><circle cx="12" cy="5" r="3.6" fill="#f6c832" stroke="#6e4418" stroke-width="0.9"/><circle cx="12" cy="5" r="2.4000000000000004" fill="#fde27a"/><circle cx="12" cy="5" r="1.1" fill="#fff" stroke="#5a3410" stroke-width="0.8"/><circle cx="4.8" cy="10.8" r="4.2" fill="none" stroke="#6e4418" stroke-width="1.9" stroke-dasharray="1.5 1.8"/><circle cx="4.8" cy="10.8" r="3.6" fill="#f6c832" stroke="#6e4418" stroke-width="0.9"/><circle cx="4.8" cy="10.8" r="2.4000000000000004" fill="#fde27a"/><circle cx="4.8" cy="10.8" r="1.1" fill="#fff" stroke="#5a3410" stroke-width="0.8"/><path d="M6.5 0.8 L2.5 3.6" stroke="#1a50a0" stroke-width="1.6"/><path d="M0.8 2 V6 H4.8Z" fill="#1a50a0"/><path d="M10.2 15.2 L14 12.4" stroke="#1a50a0" stroke-width="1.6"/><path d="M16 10.2 V14 H12Z" fill="#1a50a0"/></svg>
<div class="a t" style="left:66.89px;top:173.67px;letter-spacing:0.35px;transform:scaleX(1.1145);transform-origin:0 0;">Debug Target (simulator) hermes:53419</div>
<svg class="a" style="left:47px;top:198px;" width="12" height="7" viewBox="0 0 12 7"><path d="M0.8 0.8 H11.2 L6 6.2Z" fill="#fff" stroke="#111" stroke-width="1.2"/></svg>
<svg class="a" style="left:66px;top:194px;" width="15" height="14" viewBox="0 0 15 14"><rect x="0.5" y="6.5" width="4" height="7" fill="#f2d870" stroke="#b89020"/><rect x="5" y="6.5" width="4" height="7" fill="#f2d870" stroke="#b89020"/><circle cx="10.3" cy="4.3" r="3.9" fill="none" stroke="#6e4418" stroke-width="1.9" stroke-dasharray="1.5 1.8"/><circle cx="10.3" cy="4.3" r="3.3" fill="#f6c832" stroke="#6e4418" stroke-width="0.9"/><circle cx="10.3" cy="4.3" r="2.0999999999999996" fill="#fde27a"/><circle cx="10.3" cy="4.3" r="1.1" fill="#fff" stroke="#5a3410" stroke-width="0.8"/></svg>
<div class="a t" style="left:85.60px;top:194.67px;letter-spacing:0.35px;transform:scaleX(1.0798);transform-origin:0 0;">dvt_sync-@6.run [ACTIVE]</div>
<div class="a" style="left:9px;top:212px;width:502px;height:21px;background:linear-gradient(#a6a6a6,#929292);border-top:1px solid #8e8e8e;border-bottom:1px solid #8a8a8a"></div>
<svg class="a" style="left:85px;top:216px;" width="13" height="12" viewBox="0 0 13 12"><defs><linearGradient id="stG" x1="0" y1="0" x2="0" y2="1"><stop offset="0" stop-color="#9cc4ec"/><stop offset="0.45" stop-color="#3a7ac4"/><stop offset="1" stop-color="#1a58a0"/></linearGradient></defs><rect x="0" y="0" width="12" height="3" fill="url(#stG)"/><rect x="0" y="4" width="12" height="3" fill="url(#stG)"/><rect x="0" y="8" width="12" height="3" fill="url(#stG)"/></svg>
<div class="a t" style="left:103.30px;top:215.67px;color:#f4f4f4;letter-spacing:0.35px;transform:scaleX(1.1001);transform-origin:0 0;">dvt_sync-@6.run</div>
<svg class="a" style="left:47px;top:235px;" width="14" height="16" viewBox="0 0 14 16"><rect x="5.5" y="0.5" width="7" height="15" rx="1" fill="#d8dce4" stroke="#8a8e80"/><path d="M6 4.5H12M6 8.5H12" stroke="#8a8e80"/><rect x="7" y="1.5" width="4" height="2" fill="#2e9a3e"/><path d="M0.5 9 L7 12 L0.5 15.5Z" fill="#3aaa4a" stroke="#2a8a3a" stroke-width="0.6"/></svg>
<div class="a t" style="left:66.91px;top:236.67px;letter-spacing:0.35px;transform:scaleX(1.0927);transform-origin:0 0;">Command Process</div>
<div class="a" style="left:518px;top:115px;width:508px;height:245px;border:1px solid #a8a6a1;border-radius:6px 6px 0 0;background:#edeceb"></div>
<div class="a" style="left:519px;top:146px;width:506px;height:1px;background:#a8a6a1"></div>
<div class="a" style="left:518px;top:115px;width:107px;height:32px;border:1px solid #a8a6a1;border-radius:6px 6px 0 0;background:#ecebea"></div>
<svg class="a" style="left:523px;top:125px;" width="14" height="13" viewBox="0 0 14 13"><circle cx="3.8" cy="3.8" r="3.2" fill="#5a9ad0" stroke="#24588a"/><circle cx="3.3" cy="3.3" r="1.2" fill="#8cc0e8"/><circle cx="10" cy="9" r="3.2" fill="#5a9ad0" stroke="#24588a"/><circle cx="9.5" cy="8.5" r="1.2" fill="#8cc0e8"/></svg>
<div class="a t" style="left:541.47px;top:125.17px;letter-spacing:0.35px;transform:scaleX(1.1304);transform-origin:0 0;">Breakpoints</div>
<svg class="a" style="left:624px;top:115px;" width="139" height="34" viewBox="0 0 139 34"><defs><linearGradient id="g624_115" x1="0" y1="0" x2="0" y2="1"><stop offset="0" stop-color="#ffffff"/><stop offset="0.5" stop-color="#f4f4f3"/><stop offset="1" stop-color="#ebebea"/></linearGradient></defs><path d="M0.5 32 V6.5 Q0.5 0.5 6.5 0.5 H95.40 C99.40 0.50 102.40 2.01 105.60 5.14 L125.20 26.05 C128.40 29.28 132.40 31.30 137.90 31.5 H139 V34 H0 Z" fill="url(#g624_115)"/><path d="M0.5 32 V6.5 Q0.5 0.5 6.5 0.5 H95.40 C99.40 0.50 102.40 2.01 105.60 5.14 L125.20 26.05 C128.40 29.28 132.40 31.30 137.90 31.5 H139" fill="none" stroke="#a8a6a1" stroke-width="1"/></svg>
<div class="a" style="left:625px;top:147px;width:138px;height:1px;background:#ebebea"></div>
<svg class="a" style="left:628px;top:125px;" width="17" height="9" viewBox="0 0 17 9"><text x="0" y="7.5" font-family="Liberation Sans" font-size="9" fill="#3a5a9a" letter-spacing="0">(x)=</text></svg>
<div class="a t" style="left:648.50px;top:125.17px;letter-spacing:0.35px;transform:scaleX(1.1080);transform-origin:0 0;">Variables</div>
<svg class="a" style="left:716px;top:126px;" width="10" height="10" viewBox="0 0 10 10"><path d="M0.5 0.5 H3 L5 2.5 L7 0.5 H9.5 V3 L7.5 5 L9.5 7 V9.5 H7 L5 7.5 L3 9.5 H0.5 V7 L2.5 5 L0.5 3 Z" fill="#fff" stroke="#000" stroke-width="1.1"/></svg>
<svg class="a" style="left:846px;top:115px;" width="9" height="32" viewBox="0 0 9 32"><path d="M0 0.5 H2 Q8.5 0.5 8.5 7 V32" fill="none" stroke="#a8a6a1"/></svg>
<svg class="a" style="left:753px;top:124px;" width="17" height="14" viewBox="0 0 17 14"><g fill="#d8f0fc" stroke="#3a68a8" stroke-width="1.1"><circle cx="2.7" cy="6.2" r="2.2"/><circle cx="9.7" cy="6.2" r="2.2"/></g><g fill="none" stroke="#3a68a8" stroke-width="1.1"><path d="M4.9 5 H7.5M0.6 5.5 Q1.5 0.8 6 0.6 V2.5M11.9 5.5 Q13 1.5 15.2 1.5 V2.8"/><path d="M6 10.5 L8 12.5M8 10.5 L6 12.5" stroke-width="0.9"/><path d="M10.5 11H13.5M10.5 13H13.5" stroke-width="1.2"/></g></svg>
<div class="a t" style="left:772.50px;top:125.17px;letter-spacing:0.35px;transform:scaleX(1.0993);transform-origin:0 0;">Expressions</div>
<svg class="a" style="left:972px;top:125px;" width="11" height="5" viewBox="0 0 11 5"><rect x="0.5" y="0.5" width="9.5" height="3.2" fill="#fff" stroke="#000" stroke-width="1.1"/></svg>
<svg class="a" style="left:1000px;top:125px;" width="11" height="11" viewBox="0 0 11 11"><rect x="0.5" y="0.5" width="10" height="9" fill="#fff" stroke="#000" stroke-width="1.1"/><path d="M1 2.5 H10" stroke="#000" stroke-width="1"/></svg>
<svg class="a" style="left:911px;top:157px;" width="16" height="15" viewBox="0 0 16 15"><path d="M5.5 0.5 L3.5 9.5 M2.5 3.5 Q6 1 8.5 2" stroke="#c8c8c5" fill="none" stroke-width="1.1"/><rect x="4.5" y="7.5" width="11" height="7" rx="1" fill="#ecebea" stroke="#d2d2cf"/><path d="M7 12.5H8M9.5 12.5H10.5M12 12.5H13" stroke="#c0c0bd"/></svg>
<svg class="a" style="left:939px;top:158px;" width="17" height="13" viewBox="0 0 17 13"><path d="M0.5 5.5H5V3.5L8 6.5L5 9.5V7.5H0.5Z" fill="#f8e080" stroke="#c09020" stroke-width="0.9"/><path d="M10.5 2.5V11H13.5M10.5 7H13.5" stroke="#5a80c0" fill="none" stroke-width="1.2"/><path d="M8.5 3 L10.5 0 L12.5 3Z" fill="#3a68b0"/><path d="M12.5 1.5H15" stroke="#5a80c0"/><rect x="13" y="5.5" width="3" height="3" fill="#f08080" stroke="#d03030" stroke-width="0.8"/><rect x="13" y="9.5" width="3" height="3" fill="#f08080" stroke="#d03030" stroke-width="0.8"/></svg>
<svg class="a" style="left:969px;top:158px;" width="14" height="14" viewBox="0 0 14 14"><rect x="0.5" y="0.5" width="10" height="10" fill="#dce8f8" stroke="#7a98c8"/><rect x="3.5" y="3.5" width="10" height="10" fill="#eef4fc" stroke="#6a88b8"/><path d="M5.5 8.5H11.5" stroke="#1a4a90" stroke-width="1.6"/></svg>
<svg class="a" style="left:1006px;top:159px;" width="11" height="6" viewBox="0 0 11 6"><path d="M0.5 0.5 H10.5 L5.5 5.3 Z" fill="#fff" stroke="#000" stroke-width="1.1" stroke-linejoin="miter"/></svg>
<div class="a" style="left:521px;top:179px;width:502px;height:23px;background:linear-gradient(#fbfbfb,#f3f3f2 50%,#e7e6e5);border-bottom:1px solid #aeaca8"></div>
<div class="a" style="left:769px;top:183px;width:1px;height:15px;background:#cfcdca"></div>
<div class="a" style="left:1021px;top:183px;width:1px;height:15px;background:#cfcdca"></div>
<div class="a t" style="left:525.33px;top:184.17px;letter-spacing:0.35px;transform:scaleX(1.1700);transform-origin:0 0;">Name</div>
<div class="a t" style="left:776.40px;top:184.17px;letter-spacing:0.35px;transform:scaleX(1.1382);transform-origin:0 0;">Value</div>
<div class="a" style="left:521px;top:202px;width:502px;height:96px;background:#fff"></div>
<svg class="a" style="left:769px;top:202px;" width="2" height="21" viewBox="0 0 2 21"><path d="M0.5 0 V21" stroke="#222" stroke-dasharray="1 1"/></svg>
<svg class="a" style="left:543px;top:205px;" width="13" height="14" viewBox="0 0 13 14"><rect x="0.5" y="0.5" width="12" height="13" fill="#5aa0d8" stroke="#102a4a"/><rect x="1" y="1" width="11" height="2" fill="#2a5a9a"/><path d="M4 5 V9.5 Q6.5 12 9 9.5 V5" fill="none" stroke="#fff" stroke-width="1.6"/></svg>
<div class="a t" style="left:560.12px;top:205.57px;letter-spacing:0.35px;transform:scaleX(1.2769);transform-origin:0 0;">me</div>
<div class="a t" style="left:777.00px;top:205.57px;letter-spacing:0.35px;transform:scaleX(1.1060);transform-origin:0 0;">dvt_sync-@6</div>
<div class="a" style="left:521px;top:303px;width:484px;height:37px;background:#fff"></div>
<div class="a" style="left:1008px;top:303px;width:15px;height:36px;background:#d8d8d6;border:1px solid #8c8a86;border-radius:5px"></div>
<div class="a" style="left:1009px;top:304px;width:13px;height:14px;background:linear-gradient(#fdfdfd,#ebebea);border-bottom:1px solid #a8a6a2;border-radius:4px 4px 0 0"></div>
<div class="a" style="left:1009px;top:324px;width:13px;height:14px;background:linear-gradient(#fdfdfd,#ebebea);border-top:1px solid #a8a6a2;border-radius:0 0 4px 4px"></div>
<svg class="a" style="left:1011px;top:308px;" width="9" height="5" viewBox="0 0 9 5"><path d="M0.5 4.5 L4.5 0.8 L8.5 4.5" fill="none" stroke="#aaa" stroke-width="1.3"/></svg>
<svg class="a" style="left:1011px;top:329px;" width="9" height="5" viewBox="0 0 9 5"><path d="M0.5 0.5 L4.5 4.2 L8.5 0.5" fill="none" stroke="#aaa" stroke-width="1.3"/></svg>
<div class="a" style="left:1009px;top:317px;width:13px;height:7px;background:#b0b0ae"></div>
<div class="a" style="left:1012px;top:319px;width:7px;height:1px;background:#555"></div>
<div class="a" style="left:1012px;top:322px;width:7px;height:1px;background:#555"></div>
<div class="a" style="left:521px;top:342px;width:484px;height:15px;background:#d8d8d6;border:1px solid #8c8a86;border-radius:5px"></div>
<div class="a" style="left:522px;top:343px;width:14px;height:13px;background:linear-gradient(#fdfdfd,#e6e6e5);border-right:1px solid #a8a6a2;border-radius:4px 0 0 4px"></div>
<div class="a" style="left:990px;top:343px;width:14px;height:13px;background:linear-gradient(#fdfdfd,#e6e6e5);border-left:1px solid #a8a6a2;border-radius:0 4px 4px 0"></div>
<svg class="a" style="left:526px;top:345px;" width="5" height="9" viewBox="0 0 5 9"><path d="M4.5 0.5 L0.8 4.5 L4.5 8.5" fill="none" stroke="#aaa" stroke-width="1.3"/></svg>
<svg class="a" style="left:995px;top:345px;" width="5" height="9" viewBox="0 0 5 9"><path d="M0.5 0.5 L4.2 4.5 L0.5 8.5" fill="none" stroke="#aaa" stroke-width="1.3"/></svg>
<div class="a" style="left:536px;top:343px;width:454px;height:13px;background:linear-gradient(#c2c2c2,#a6a6a6);border-left:1px solid #8a8a88;border-right:1px solid #8a8a88"></div>
<div class="a" style="left:760px;top:347px;width:1px;height:6px;background:#6a6a68"></div>
<div class="a" style="left:763px;top:347px;width:1px;height:6px;background:#6a6a68"></div>
<div class="a" style="left:766px;top:347px;width:1px;height:6px;background:#6a6a68"></div>
<div class="a" style="left:6px;top:364px;width:554px;height:356px;border:1px solid #a8a6a1;border-radius:6px 6px 0 0;background:#edeceb"></div>
<div class="a" style="left:7px;top:395px;width:552px;height:1px;background:#a8a6a1"></div>
<svg class="a" style="left:6px;top:364px;" width="188" height="34" viewBox="0 0 188 34"><defs><linearGradient id="g6_364" x1="0" y1="0" x2="0" y2="1"><stop offset="0" stop-color="#ffffff"/><stop offset="0.5" stop-color="#f4f4f3"/><stop offset="1" stop-color="#ebebea"/></linearGradient></defs><path d="M0.5 32 V6.5 Q0.5 0.5 6.5 0.5 H144.90 C148.90 0.50 151.90 2.01 155.10 5.14 L174.70 26.05 C177.90 29.28 181.90 31.30 187.40 31.5 H188 V34 H0 Z" fill="url(#g6_364)"/><path d="M0.5 32 V6.5 Q0.5 0.5 6.5 0.5 H144.90 C148.90 0.50 151.90 2.01 155.10 5.14 L174.70 26.05 C177.90 29.28 181.90 31.30 187.40 31.5 H188" fill="none" stroke="#a8a6a1" stroke-width="1"/></svg>
<div class="a" style="left:7px;top:396px;width:552px;height:2px;background:#ebebea"></div>
<div class="a" style="left:8px;top:398px;width:550px;height:320px;background:#fff"></div>
<svg class="a" style="left:12px;top:373px;" width="13" height="12" viewBox="0 0 13 12"><defs><linearGradient id="stG" x1="0" y1="0" x2="0" y2="1"><stop offset="0" stop-color="#9cc4ec"/><stop offset="0.45" stop-color="#3a7ac4"/><stop offset="1" stop-color="#1a58a0"/></linearGradient></defs><rect x="0" y="0" width="12" height="3" fill="url(#stG)"/><rect x="0" y="4" width="12" height="3" fill="url(#stG)"/><rect x="0" y="8" width="12" height="3" fill="url(#stG)"/></svg>
<div class="a t" style="left:30.60px;top:374.37px;letter-spacing:0.35px;transform:scaleX(1.1032);transform-origin:0 0;">dvt_sync-@6.run</div>
<svg class="a" style="left:147px;top:376px;" width="10" height="10" viewBox="0 0 10 10"><path d="M0.5 0.5 H3 L5 2.5 L7 0.5 H9.5 V3 L7.5 5 L9.5 7 V9.5 H7 L5 7.5 L3 9.5 H0.5 V7 L2.5 5 L0.5 3 Z" fill="#fff" stroke="#000" stroke-width="1.1"/></svg>
<svg class="a" style="left:506px;top:374px;" width="11" height="5" viewBox="0 0 11 5"><rect x="0.5" y="0.5" width="9.5" height="3.2" fill="#fff" stroke="#000" stroke-width="1.1"/></svg>
<svg class="a" style="left:534px;top:374px;" width="11" height="11" viewBox="0 0 11 11"><rect x="0.5" y="0.5" width="10" height="9" fill="#fff" stroke="#000" stroke-width="1.1"/><path d="M1 2.5 H10" stroke="#000" stroke-width="1"/></svg>
<div class="a t" style="left:13.39px;top:403.97px;color:#f01414;letter-spacing:0.35px;transform:scaleX(1.1073);transform-origin:0 0;">Source not found.</div>
<div class="a" style="left:14px;top:443px;width:180px;height:26px;background:#ecebea"></div>
<div class="a" style="left:15px;top:444px;width:178px;height:25px;background:linear-gradient(#fdfdfd,#f2f2f1 50%,#e4e3e1);border:1px solid #9e9b95;border-radius:3px"></div>
<div class="a t" style="left:19.22px;top:450.37px;letter-spacing:0.35px;transform:scaleX(1.0772);transform-origin:0 0;"><u>E</u>dit Source Lookup Path...</div>
<div class="a" style="left:564px;top:364px;width:462px;height:356px;border:1px solid #a8a6a1;border-radius:6px 6px 0 0;background:#edeceb"></div>
<div class="a" style="left:565px;top:395px;width:460px;height:1px;background:#a8a6a1"></div>
<div class="a" style="left:693px;top:364px;width:126px;height:32px;border-right:1px solid #a8a6a1;border-top:1px solid #a8a6a1;border-radius:0 6px 0 0;background:#ecebea"></div>
<div class="a" style="left:818px;top:364px;width:84px;height:32px;border:1px solid #a8a6a1;border-bottom:none;border-radius:6px 6px 0 0;background:#ecebea"></div>
<svg class="a" style="left:564px;top:364px;" width="132" height="34" viewBox="0 0 132 34"><defs><linearGradient id="g564_364" x1="0" y1="0" x2="0" y2="1"><stop offset="0" stop-color="#f9f9f9"/><stop offset="0.6" stop-color="#e4e4e3"/><stop offset="1" stop-color="#d4d4d3"/></linearGradient></defs><path d="M0.5 32 V6.5 Q0.5 0.5 6.5 0.5 H88.30 C92.30 0.50 95.30 2.01 98.50 5.14 L118.10 26.05 C121.30 29.28 125.30 31.30 130.80 31.5 H132 V34 H0 Z" fill="url(#g564_364)"/><path d="M0.5 32 V6.5 Q0.5 0.5 6.5 0.5 H88.30 C92.30 0.50 95.30 2.01 98.50 5.14 L118.10 26.05 C121.30 29.28 125.30 31.30 130.80 31.5 H132" fill="none" stroke="#a8a6a1" stroke-width="1"/></svg>
<div class="a" style="left:565px;top:396px;width:1px;height:1px;background:#d4d4d3"></div>
<svg class="a" style="left:570px;top:372px;" width="14" height="14" viewBox="0 0 14 14"><rect x="0.8" y="0.8" width="12.4" height="9.4" rx="1.2" fill="#e8f4fc" stroke="#3068b8" stroke-width="1.6"/><path d="M3 4H8M3 6.5H10" stroke="#4870b0"/><path d="M5 11V12.5M9 11V12.5M3 13.2H11" stroke="#3068b8" stroke-width="1.4"/></svg>
<div class="a t" style="left:587.37px;top:373.97px;letter-spacing:0.35px;transform:scaleX(1.1286);transform-origin:0 0;">Console</div>
<svg class="a" style="left:648px;top:376px;" width="10" height="10" viewBox="0 0 10 10"><path d="M0.5 0.5 H3 L5 2.5 L7 0.5 H9.5 V3 L7.5 5 L9.5 7 V9.5 H7 L5 7.5 L3 9.5 H0.5 V7 L2.5 5 L0.5 3 Z" fill="#fff" stroke="#000" stroke-width="1.1"/></svg>
<svg class="a" style="left:686px;top:374px;" width="14" height="12" viewBox="0 0 14 12"><rect x="0" y="0" width="14" height="12" fill="#111"/><rect x="1" y="1" width="12" height="4" fill="#333"/><path d="M2 2 L4 3" stroke="#aaa" stroke-width="0.8"/></svg>
<div class="a t" style="left:705.60px;top:373.97px;letter-spacing:0.35px;transform:scaleX(1.1317);transform-origin:0 0;">alex@hermes: ~</div>
<svg class="a" style="left:824px;top:373px;" width="15" height="14" viewBox="0 0 15 14"><rect x="0.5" y="1.5" width="13" height="8" fill="#f4f4f4" stroke="#8a9a8a"/><rect x="1" y="3" width="7" height="2.5" fill="#3aa04a"/><circle cx="10.5" cy="10" r="3.6" fill="#2e9a3e" stroke="#1e7a2e" stroke-width="0.8"/><path d="M9.5 8 L12.5 10 L9.5 12Z" fill="#fff"/></svg>
<div class="a t" style="left:841.21px;top:373.97px;letter-spacing:0.35px;transform:scaleX(1.0922);transform-origin:0 0;">Progress</div>
<svg class="a" style="left:972px;top:374px;" width="11" height="5" viewBox="0 0 11 5"><rect x="0.5" y="0.5" width="9.5" height="3.2" fill="#fff" stroke="#000" stroke-width="1.1"/></svg>
<svg class="a" style="left:1000px;top:374px;" width="11" height="11" viewBox="0 0 11 11"><rect x="0.5" y="0.5" width="10" height="9" fill="#fff" stroke="#000" stroke-width="1.1"/><path d="M1 2.5 H10" stroke="#000" stroke-width="1"/></svg>
<div class="a" style="left:565px;top:396px;width:2px;height:323px;background:#d8d7d5"></div>
<div class="a" style="left:565px;top:396px;width:460px;height:2px;background:#d8d7d5"></div>
<div class="a" style="left:1023px;top:396px;width:2px;height:323px;background:#d8d7d5"></div>
<div class="a" style="left:565px;top:717px;width:460px;height:2px;background:#d8d7d5"></div>
<svg class="a" style="left:647px;top:408px;" width="12" height="12" viewBox="0 0 12 12"><rect x="0.5" y="0.5" width="11" height="11" rx="1.5" fill="#e3202a" stroke="#b8141c"/><rect x="2" y="2" width="8" height="3" fill="#f04a50"/></svg>
<svg class="a" style="left:673px;top:406px;" width="16" height="16" viewBox="0 0 16 16"><path d="M3.5 3.5 L12.5 12.5M12.5 3.5 L3.5 12.5" stroke="#c6c6c4" stroke-width="3.6" stroke-linecap="round"/></svg>
<svg class="a" style="left:701px;top:405px;" width="16" height="17" viewBox="0 0 16 17"><path d="M2 2 L8.5 8.5M8.5 2 L2 8.5" stroke="#d2d2d0" stroke-width="3.4" stroke-linecap="round"/><path d="M2 2 L8.5 8.5M8.5 2 L2 8.5" stroke="#f2f2f0" stroke-width="1.4" stroke-linecap="round"/><path d="M6.5 7.5 L13.5 14.5M13.5 7.5 L6.5 14.5" stroke="#c6c6c4" stroke-width="3.6" stroke-linecap="round"/></svg>
<div class="a" style="left:728px;top:405px;width:1px;height:17px;background:#c8c6c1"></div>
<div class="a" style="left:729px;top:405px;width:1px;height:17px;background:#fafaf9"></div>
<svg class="a" style="left:741px;top:405px;" width="16" height="15" viewBox="0 0 16 15"><path d="M0.5 0.5 H7.5 L10.5 3.5 V13.5 H0.5Z" fill="#fdfdf8" stroke="#a09870"/><path d="M7.5 0.5 V3.5 H10.5" fill="#e8e0c0" stroke="#a09870"/><path d="M2 4.5H7M2 6.5H8.5M2 8.5H8.5M2 10.5H6" stroke="#4a70b0" stroke-width="0.9"/><path d="M9.5 9 L14.5 14M14.5 9 L9.5 14" stroke="#5a5a5a" stroke-width="2.2"/></svg>
<svg class="a" style="left:768px;top:405px;" width="15" height="16" viewBox="0 0 15 16"><rect x="2.5" y="0.5" width="12" height="15" fill="#eef4fb" stroke="#5a7ab0"/><path d="M10.5 0.5 V15.5" stroke="#5a7ab0"/><rect x="12" y="2.5" width="1.2" height="1.2" fill="#3a5a90"/><rect x="12" y="7.5" width="1.2" height="1.2" fill="#3a5a90"/><rect x="12" y="12.5" width="1.2" height="1.2" fill="#3a5a90"/><rect x="0.5" y="9.5" width="7" height="6" fill="#f0c860" stroke="#b08a30"/><path d="M1.8 9.5V7.5 Q4 5 6.2 7.5 V9.5" fill="none" stroke="#9a8a70" stroke-width="1.2"/></svg>
<div class="a" style="left:795px;top:405px;width:1px;height:17px;background:#c8c6c1"></div>
<div class="a" style="left:796px;top:405px;width:1px;height:17px;background:#fafaf9"></div>
<svg class="a" style="left:809px;top:405px;" width="15" height="16" viewBox="0 0 15 16"><rect x="0.5" y="0.5" width="11" height="11" rx="1.5" fill="#dfe8f5" stroke="#5a7ab0"/><rect x="3" y="1" width="6" height="4" fill="#fbf3d8" stroke="#c8b078" stroke-width="0.8"/><rect x="3" y="7.5" width="6" height="4" fill="#f0e0b0" stroke="#5674a8" stroke-width="0.8"/><path d="M7 14.5H8.5M9.8 14.5H11.3M12.6 14.5H14.1" stroke="#1a3a8a" stroke-width="1.5"/></svg>
<div class="a" style="left:831px;top:400px;width:26px;height:26px;background:linear-gradient(#c9c7c3,#d6d4d0);border:1px solid #85837e;border-radius:4px;box-shadow:inset 1px 1px 1px #b8b6b1"></div>
<svg class="a" style="left:836px;top:405px;" width="18" height="17" viewBox="0 0 18 17"><rect x="5.5" y="1.5" width="11.5" height="9" fill="#f6faff" stroke="#2a70c8" stroke-width="1.2"/><path d="M8 4.5H14.5M8 6.8H14" stroke="#3a68a8" stroke-width="1"/><rect x="2.5" y="8.5" width="6.5" height="5" fill="#dbe8f8" stroke="#2a70c8"/><path d="M3.5 15.5H8M5.8 13.5V15.5" stroke="#2a70c8" stroke-width="1.2"/></svg>
<div class="a" style="left:859px;top:400px;width:26px;height:26px;background:linear-gradient(#c9c7c3,#d6d4d0);border:1px solid #85837e;border-radius:4px;box-shadow:inset 1px 1px 1px #b8b6b1"></div>
<svg class="a" style="left:864px;top:405px;" width="18" height="17" viewBox="0 0 18 17"><rect x="5.5" y="1.5" width="11.5" height="9" fill="#f6faff" stroke="#2a70c8" stroke-width="1.2"/><path d="M8 3.5L11 7M11 3.5L8 7" stroke="#e02828" stroke-width="1.5"/><path d="M12.3 4.2H15M12.3 6.5H15" stroke="#3a68a8" stroke-width="1"/><rect x="2.5" y="8.5" width="6.5" height="5" fill="#dbe8f8" stroke="#2a70c8"/><path d="M3.5 15.5H8M5.8 13.5V15.5" stroke="#2a70c8" stroke-width="1.2"/></svg>
<div class="a" style="left:891px;top:405px;width:1px;height:17px;background:#c8c6c1"></div>
<div class="a" style="left:892px;top:405px;width:1px;height:17px;background:#fafaf9"></div>
<svg class="a" style="left:906px;top:405px;" width="15" height="15" viewBox="0 0 15 15"><rect x="0.5" y="4.5" width="11" height="9" fill="#f4f8fc" stroke="#8a9098"/><rect x="1" y="5" width="10" height="2" fill="#4a90d8"/><path d="M5 11 L8.5 7.5" stroke="#334" stroke-width="1"/><path d="M7.5 6 L11.5 2 L14 4.5 L10 8.5Z" fill="#3aaa4a" stroke="#1e7a2e" stroke-width="0.8"/><circle cx="12.3" cy="2.8" r="2.2" fill="#4aba5a" stroke="#1e7a2e" stroke-width="0.8"/></svg>
<svg class="a" style="left:934px;top:405px;" width="14" height="14" viewBox="0 0 14 14"><rect x="0.5" y="0.5" width="13" height="9" rx="1" fill="#f2f2f0" stroke="#c8c8c5" stroke-width="1.2"/><path d="M3 3.5H9M3 6H10" stroke="#c8c8c5"/><path d="M4 12.5H10M7 9.5V12.5" stroke="#c8c8c5" stroke-width="1.4"/></svg>
<svg class="a" style="left:961px;top:411px;" width="6" height="4" viewBox="0 0 6 4"><path d="M0.5 0.5 L3 3 L5.5 0.5" fill="none" stroke="#c8c8c5" stroke-width="1.3"/></svg>
<svg class="a" style="left:981px;top:405px;" width="16" height="15" viewBox="0 0 16 15"><rect x="0.5" y="3.5" width="12" height="11" fill="#eaf6fe" stroke="#8a7a40"/><rect x="1" y="4" width="9" height="2.5" fill="#3c8fd6"/><path d="M2 14 Q9 13 11 8" stroke="#f0dc90" stroke-width="1.2" fill="none"/><path d="M12 0.5 L13.3 2.8 L15.6 4 L13.3 5.2 L12 7.5 L10.7 5.2 L8.4 4 L10.7 2.8Z" fill="#fff" stroke="#b8962c"/></svg>
<svg class="a" style="left:1009px;top:411px;" width="6" height="4" viewBox="0 0 6 4"><path d="M0.5 0.5 L3 3 L5.5 0.5" fill="none" stroke="#3a3a3a" stroke-width="1.3"/></svg>
<div class="a t" style="left:566.40px;top:429.17px;letter-spacing:0.35px;transform:scaleX(1.1007);transform-origin:0 0;">[uvm_ml-1.1_xbus_e] [DebugBatchIUS__uvm_ml-1.1_xbus_e__test_m</div>
<div class="a" style="left:566px;top:443px;width:440px;height:256px;background:#fff"></div>
<div class="a" style="left:566px;top:443px;width:440px;height:256px;overflow:hidden"><div class="a mono" style="left:3px;top:3px">-------------- E path: sys.xbus_evc

-------------- XBUS SLAVE_0: simple_ram_env_u-@3
Cadence's XBus Golden eVC  -  version 2.1
-------------- E path: sys.xbus_evc.active_slaves[0].AC

-------------- XBUS SLAVE_1: simple_ram_env_u-@4
Cadence's XBus Golden eVC  -  version 2.1
-------------- E path: sys.xbus_evc.active_slaves[1].AC

Starting the test ...
Running the test ...
?!writeEvent {&lt;sn_notif id="0" command="add_breakpoint'
Host: hermes Port: 53419
after#5</div></div>
<div class="a" style="left:1008px;top:445px;width:15px;height:254px;background:#d8d8d6;border:1px solid #8c8a86;border-radius:5px"></div>
<div class="a" style="left:1009px;top:446px;width:13px;height:14px;background:linear-gradient(#fdfdfd,#ebebea);border-bottom:1px solid #a8a6a2;border-radius:4px 4px 0 0"></div>
<div class="a" style="left:1009px;top:684px;width:13px;height:14px;background:linear-gradient(#fdfdfd,#ebebea);border-top:1px solid #a8a6a2;border-radius:0 0 4px 4px"></div>
<svg class="a" style="left:1011px;top:450px;" width="9" height="5" viewBox="0 0 9 5"><path d="M0.5 4.5 L4.5 0.8 L8.5 4.5" fill="none" stroke="#222" stroke-width="1.3"/></svg>
<svg class="a" style="left:1011px;top:689px;" width="9" height="5" viewBox="0 0 9 5"><path d="M0.5 0.5 L4.5 4.2 L8.5 0.5" fill="none" stroke="#aaa" stroke-width="1.3"/></svg>
<div class="a" style="left:1009px;top:623px;width:13px;height:61px;background:linear-gradient(90deg,#bdbdbd,#a9a9a9);border:1px solid #8a8a88"></div>
<div class="a" style="left:1012px;top:650px;width:7px;height:1px;background:#6a6a68"></div>
<div class="a" style="left:1012px;top:653px;width:7px;height:1px;background:#6a6a68"></div>
<div class="a" style="left:1012px;top:656px;width:7px;height:1px;background:#6a6a68"></div>
<div class="a" style="left:567px;top:702px;width:438px;height:15px;background:#d8d8d6;border:1px solid #8c8a86;border-radius:5px"></div>
<div class="a" style="left:568px;top:703px;width:14px;height:13px;background:linear-gradient(#fdfdfd,#e6e6e5);border-right:1px solid #a8a6a2;border-radius:4px 0 0 4px"></div>
<div class="a" style="left:990px;top:703px;width:14px;height:13px;background:linear-gradient(#fdfdfd,#e6e6e5);border-left:1px solid #a8a6a2;border-radius:0 4px 4px 0"></div>
<svg class="a" style="left:572px;top:705px;" width="5" height="9" viewBox="0 0 5 9"><path d="M4.5 0.5 L0.8 4.5 L4.5 8.5" fill="none" stroke="#aaa" stroke-width="1.3"/></svg>
<svg class="a" style="left:995px;top:705px;" width="5" height="9" viewBox="0 0 5 9"><path d="M0.5 0.5 L4.2 4.5 L0.5 8.5" fill="none" stroke="#222" stroke-width="1.3"/></svg>
<div class="a" style="left:581px;top:703px;width:45px;height:13px;background:linear-gradient(#c2c2c2,#a6a6a6);border-left:1px solid #8a8a88;border-right:1px solid #8a8a88"></div>
<div class="a" style="left:600px;top:707px;width:1px;height:6px;background:#6a6a68"></div>
<div class="a" style="left:603px;top:707px;width:1px;height:6px;background:#6a6a68"></div>
<div class="a" style="left:606px;top:707px;width:1px;height:6px;background:#6a6a68"></div>
<div class="a" style="left:555px;top:725px;width:2px;height:3px;background:#a09c94;border-radius:1px"></div>
<div class="a" style="left:555px;top:731px;width:2px;height:3px;background:#a09c94;border-radius:1px"></div>
<div class="a" style="left:555px;top:737px;width:2px;height:3px;background:#a09c94;border-radius:1px"></div>
<div class="a" style="left:555px;top:743px;width:2px;height:3px;background:#a09c94;border-radius:1px"></div>
<div class="a" style="left:559px;top:720px;width:130px;height:32px;border-left:1px solid #a5a39e;border-top:1px solid #a5a39e;background:#edeceb"></div>
<div class="a" style="left:560px;top:721px;width:32px;height:31px;background:#f4f2b8"></div>
<div class="a" style="left:592px;top:721px;width:1px;height:31px;background:#a5a39e"></div>
<div class="a" style="left:688px;top:721px;width:1px;height:31px;background:#a5a39e"></div>
<div class="a" style="left:559px;top:752px;width:472px;height:1px;background:#fbfbfa"></div>
<div class="a t" style="left:575.69px;top:729.07px;letter-spacing:0.35px;transform:scaleX(1.1066);transform-origin:0 0;">501M of 1964M</div>
<svg class="a" style="left:691px;top:727px;" width="13" height="16" viewBox="0 0 13 16"><rect x="0.5" y="1.5" width="12" height="2.5" rx="1" fill="#3a8ac8" stroke="#2a5a90"/><rect x="4.5" y="0" width="4" height="2" fill="none" stroke="#2a5a90"/><path d="M1.5 4 L2.5 15.5 H10.5 L11.5 4Z" fill="#5aaae0" stroke="#2a5a90"/><path d="M4.5 6V14M6.5 6V14M8.5 6V14" stroke="#e8f0a0" stroke-width="1"/></svg>
<div class="a" style="left:707px;top:724px;width:2px;height:3px;background:#a09c94;border-radius:1px"></div>
<div class="a" style="left:707px;top:730px;width:2px;height:3px;background:#a09c94;border-radius:1px"></div>
<div class="a" style="left:707px;top:736px;width:2px;height:3px;background:#a09c94;border-radius:1px"></div>
<div class="a" style="left:707px;top:742px;width:2px;height:3px;background:#a09c94;border-radius:1px"></div>
<div class="a" style="left:707px;top:748px;width:2px;height:3px;background:#a09c94;border-radius:1px"></div>
<div class="a t" style="left:712.30px;top:729.07px;letter-spacing:0.35px;transform:scaleX(1.0968);transform-origin:0 0;">Launching DebugBatchI...eset: (57%)</div>
<svg class="a" style="left:968px;top:729px;" width="24" height="12" viewBox="0 0 24 12"><rect x="0.5" y="0.5" width="23" height="11" rx="5" fill="#d6d6d4" stroke="#8a8a88"/><rect x="1.5" y="1.5" width="10" height="9" rx="4" fill="#c4c4c2"/><path d="M12 1V11" stroke="#8a8a88"/></svg>
<svg class="a" style="left:1001px;top:728px;" width="16" height="14" viewBox="0 0 16 14"><rect x="0.5" y="0.5" width="11" height="8" fill="#e0f0e0" stroke="#5a9a5a"/><rect x="2.5" y="2.5" width="11" height="8" fill="#e8f4e8" stroke="#4a8a4a"/><rect x="4.5" y="4.5" width="11" height="8" fill="#f0f8f0" stroke="#3a7a3a"/><rect x="5.5" y="6" width="9" height="2.5" fill="#3aa04a"/></svg>
</body></html>
